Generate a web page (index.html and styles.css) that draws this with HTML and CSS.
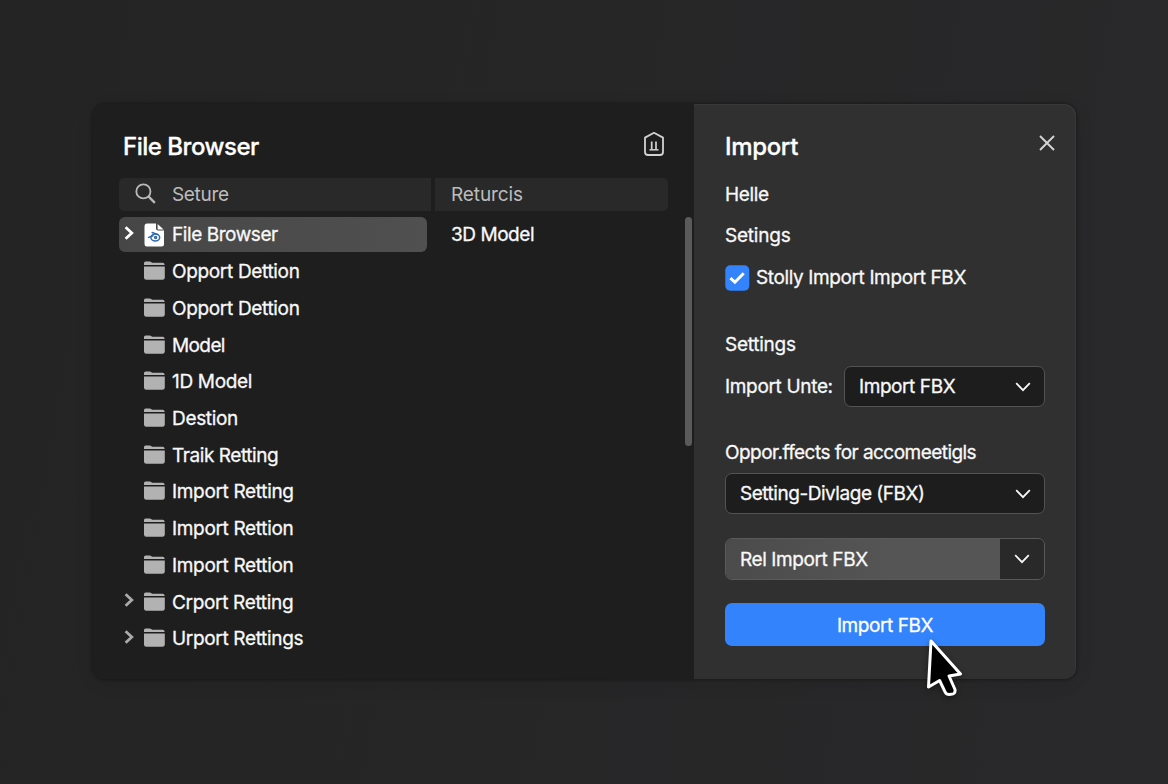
FILE: index.html
```
<!DOCTYPE html>
<html lang="en">
<head>
<meta charset="utf-8">
<title>File Browser</title>
<link rel="stylesheet" href="styles.css">
</head>
<body>
<svg class="defs" width="0" height="0">
  <symbol id="folder" viewBox="0 0 21 20"><path d="M0 4V2Q0 .4 1.6 .4H5.6Q6.6 .4 7.2 1L8 1.7H18.8Q20.4 1.7 20.6 3.6V4Z"/><path d="M0 5.4H20.8V16.4Q20.8 18.8 18.4 18.8H2.4Q0 18.8 0 16.4Z"/></symbol>
  <symbol id="chev" viewBox="0 0 10 14"><path d="M1.6 1.3L7.8 7L1.6 12.7" fill="none" stroke="currentColor" stroke-width="2.8"/></symbol>
  <symbol id="down" viewBox="0 0 16 10"><path d="M1.2 1.2L8 8.2L14.8 1.2" fill="none" stroke="currentColor" stroke-width="1.8"/></symbol>
</svg>
<main class="window">
  <section class="browser">
    <header class="head">
      <h1 class="title title-browser">File Browser</h1>
      <svg class="bin" width="22" height="26" viewBox="0 0 22 26" fill="none" stroke="#d2d2d2" stroke-width="1.8" stroke-linejoin="round"><path d="M11 1.8L20 6.6V21Q20 24 17 24H5Q2 24 2 21V6.6Z"/><path d="M8.7 10.5V18M13 10.5V18" stroke-width="1.7"/><path d="M6.5 18.8H15.5" stroke-width="1.5"/></svg>
    </header>
    <div class="columns">
      <div class="col col-search"><svg width="21" height="21" viewBox="0 0 22 22" fill="none" stroke="#b9b9b9" stroke-width="1.9"><circle cx="8.8" cy="8.8" r="7.4"/><path d="M13.8 13.8L20.8 20.8" stroke-width="2.4"/></svg><span>Seture</span></div>
      <div class="col col-type"><span>Returcis</span></div>
    </div>
    <div class="content">
      <ul class="tree">
        <li class="row selected"><svg class="arrow" width="10" height="14"><use href="#chev"/></svg><svg class="icon" width="21" height="24" viewBox="0 0 21 24"><path fill="#fff" d="M2.8 0.5H12V5.5Q12 7.5 14 7.5H20V21Q20 23.5 17.5 23.5H2.8Q.5 23.5 .5 21V3Q.5 .5 2.8 .5Z"/><path fill="#fff" d="M13.6 1L19.6 6.4H13.6Z"/><g fill="none" stroke="#3468ae" stroke-width="1.5" stroke-linecap="round"><path d="M4.6 14.4L9 12.7M8.2 9.5L14 11.6"/><ellipse cx="11.3" cy="14.5" rx="4.4" ry="3.5"/><circle cx="11.6" cy="14.4" r="1"/></g></svg><span class="tight">File Browser</span></li>
        <li class="row"><i class="arrow"></i><svg class="icon" width="21" height="20"><use href="#folder"/></svg><span>Opport Dettion</span></li>
        <li class="row"><i class="arrow"></i><svg class="icon" width="21" height="20"><use href="#folder"/></svg><span>Opport Dettion</span></li>
        <li class="row"><i class="arrow"></i><svg class="icon" width="21" height="20"><use href="#folder"/></svg><span class="tighter">Model</span></li>
        <li class="row"><i class="arrow"></i><svg class="icon" width="21" height="20"><use href="#folder"/></svg><span>1D Model</span></li>
        <li class="row"><i class="arrow"></i><svg class="icon" width="21" height="20"><use href="#folder"/></svg><span>Destion</span></li>
        <li class="row"><i class="arrow"></i><svg class="icon" width="21" height="20"><use href="#folder"/></svg><span class="tight">Traik Retting</span></li>
        <li class="row"><i class="arrow"></i><svg class="icon" width="21" height="20"><use href="#folder"/></svg><span>Import Retting</span></li>
        <li class="row"><i class="arrow"></i><svg class="icon" width="21" height="20"><use href="#folder"/></svg><span>Import Rettion</span></li>
        <li class="row"><i class="arrow"></i><svg class="icon" width="21" height="20"><use href="#folder"/></svg><span>Import Rettion</span></li>
        <li class="row"><svg class="arrow" width="10" height="14"><use href="#chev"/></svg><svg class="icon" width="21" height="20"><use href="#folder"/></svg><span>Crport Retting</span></li>
        <li class="row"><svg class="arrow" width="10" height="14"><use href="#chev"/></svg><svg class="icon" width="21" height="20"><use href="#folder"/></svg><span>Urport Rettings</span></li>
      </ul>
      <div class="kind">3D Model</div>
      <div class="scrollbar"></div>
    </div>
  </section>
  <aside class="import">
    <header class="import-head">
      <h2 class="title title-import">Import</h2>
      <svg class="close" width="16" height="16" viewBox="0 0 16 16" stroke="#d4d4d4" stroke-width="1.9"><path d="M1 1L15 15M15 1L1 15"/></svg>
    </header>
    <p class="line">Helle</p>
    <p class="line setings">Setings</p>
    <label class="check"><svg width="25" height="26" viewBox="0 0 25 26"><rect x=".3" y=".3" width="24" height="25.4" rx="5" fill="#3384fc"/><path d="M5.4 13.2L9.9 17.2L18.7 8.2" fill="none" stroke="#fff" stroke-width="2.9"/></svg><span>Stolly Import Import FBX</span></label>
    <p class="line settings">Settings</p>
    <div class="field"><span class="field-label">Import Unte:</span><div class="select select-unit"><span>Import FBX</span><svg width="16" height="10"><use href="#down"/></svg></div></div>
    <p class="line effects">Oppor.ffects for accomeetigls</p>
    <div class="select select-preset"><span>Setting-Divlage (FBX)</span><svg width="16" height="10"><use href="#down"/></svg></div>
    <div class="split"><span class="split-main">Rel Import FBX</span><span class="split-drop"><svg width="16" height="10"><use href="#down"/></svg></span></div>
    <button class="primary">Import FBX</button>
  </aside>
</main>
<svg class="cursor" width="44" height="66" viewBox="0 0 44 66"><path d="M9 5L38.5 38L27 40L33 53.5Q33.6 58.3 29 58.3Q24.6 59 23.3 56.3L17.6 44.5L6.5 51Z" fill="#000" stroke="#fff" stroke-width="3" stroke-linejoin="round"/></svg>
</body>
</html>
```
FILE: styles.css
```
* { box-sizing: border-box; }
body {
  margin: 0;
  height: 784px;
  overflow: hidden;
  padding: 104px 0 0 93px;
  background: linear-gradient(100deg, #242424 0%, #262627 45%, #29292b 100%);
  color: #f8f8f8;
  font: 400 19px/24px Inter, "Liberation Sans", sans-serif;
  letter-spacing: -0.33px;
  -webkit-text-stroke: 0.3px;
}
.defs { position: absolute; }
.window {
  display: flex;
  width: 983px;
  height: 575px;
  border-radius: 12px;
  box-shadow: 0 0 3px 1px rgba(0, 0, 0, .3), 0 4px 18px rgba(0, 0, 0, .1);
}
.browser {
  width: 601px;
  padding: 0 0 0 26px;
  background: #1e1e1e;
  border-radius: 12px 0 0 12px;
}
.head {
  display: flex;
  justify-content: space-between;
  height: 74px;
  padding: 27px 29px 0 4px;
}
.title { margin: 0; padding-top: 1px; font-size: 24px; line-height: 30px; font-weight: 500; color: #fff; }
.title-browser { letter-spacing: -0.48px; }
.title-import { letter-spacing: -0.35px; }
.bin { margin-top: 0; }
.columns { display: flex; gap: 4px; height: 33px; color: #bcbcbc; -webkit-text-stroke: 0; }
.col { display: flex; align-items: center; background: #292929; }
.col span { padding-top: 1px; }
.col-search { width: 312px; gap: 16px; padding-left: 16px; border-radius: 5px 0 0 5px; }
.col-search svg { margin-top: -3px; }
.col-type { width: 233px; padding-left: 16px; border-radius: 0 5px 5px 0; letter-spacing: -0.1px; }
.content { display: flex; padding-top: 6px; }
.tree {
  width: 308px;
  margin: 0;
  padding: 0;
  list-style: none;
}
.row { display: flex; align-items: center; height: 36.7px; padding-left: 5px; white-space: nowrap; }
.row span { padding-top: 2px; }
.row.selected {
  height: 35px;
  margin-bottom: 1px;
  border-radius: 6px;
  background: linear-gradient(90deg, #464646, #505050);
}
.selected span { padding-top: 1px; }
.tight { letter-spacing: -0.43px; }
.tighter { letter-spacing: -0.6px; }
.arrow { width: 10px; color: #aaa; margin-top: -3px; }
.selected .arrow { color: #fff; }
.icon { margin: 0 7px 0 10px; fill: #b2b2b2; flex: none; }
.kind { width: 258px; padding: 6px 0 0 24px; letter-spacing: -0.45px; }
.scrollbar { width: 7px; height: 229px; border-radius: 4px; background: #5a5a5a; }
.import {
  width: 382px;
  padding: 0 31px;
  background: #303030;
  border-radius: 0 12px 12px 0;
  box-shadow: inset -1px 1px 0 #383838;
}
.import-head { display: flex; justify-content: space-between; height: 79px; padding-top: 27px; }
.close { margin: 4px -10px 0 0; }
.line { margin: 0; height: 24px; white-space: nowrap; }
.setings { margin-top: 17px; letter-spacing: -0.22px; }
.check { display: flex; align-items: center; gap: 6px; height: 26px; margin-top: 17px; white-space: nowrap; letter-spacing: -0.38px; }
.settings { margin-top: 42px; letter-spacing: -0.25px; }
.field { display: flex; align-items: center; justify-content: space-between; margin-top: 9px; }
.field-label { white-space: nowrap; }
.select {
  display: flex;
  align-items: center;
  justify-content: space-between;
  height: 41px;
  padding: 0 13px 0 14px;
  border: 1px solid #535353;
  border-radius: 7px;
  background: #1d1d1d;
  white-space: nowrap;
}
.select-unit { width: 201px; letter-spacing: -0.42px; }
.effects { margin-top: 34px; letter-spacing: -0.54px; }
.select-preset { margin-top: 8px; letter-spacing: -0.47px; }
.select-preset span { padding-top: 1px; }
.split {
  display: flex;
  height: 42px;
  margin-top: 24px;
  border: 1px solid #5a5a5a;
  border-radius: 7px;
  overflow: hidden;
}
.split-main { display: flex; align-items: center; flex: 1; padding: 2px 0 0 14px; background: linear-gradient(90deg, #4b4b4b, #555 60%); letter-spacing: -0.4px; }
.split-drop { display: flex; align-items: center; justify-content: center; width: 44px; background: #292929; }
.primary {
  display: block;
  width: 100%;
  height: 43px;
  margin-top: 23px;
  padding: 2px 0 0;
  border: 0;
  border-radius: 7px;
  background: #3384fc;
  color: #fff;
  font: inherit;
  letter-spacing: -0.42px;
}
.cursor { position: absolute; left: 922px; top: 636px; filter: drop-shadow(0 2px 3px rgba(0, 0, 0, .4)); }
```
